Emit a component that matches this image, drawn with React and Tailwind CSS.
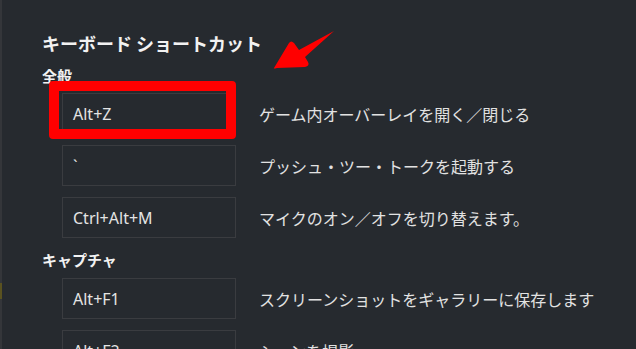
const jp = { fontFamily: '"Noto Sans CJK JP", "Noto Sans", sans-serif' };
const latin = { fontFamily: '"Noto Sans", "Noto Sans CJK JP", sans-serif' };

const sections = [
  {
    title: "全般",
    rows: [
      { keys: "Alt+Z", label: "ゲーム内オーバーレイを開く／閉じる", marked: true },
      { keys: "`", label: "プッシュ・ツー・トークを起動する" },
      { keys: "Ctrl+Alt+M", label: "マイクのオン／オフを切り替えます。" },
    ],
  },
  {
    title: "キャプチャ",
    rows: [
      { keys: "Alt+F1", label: "スクリーンショットをギャラリーに保存します" },
      { keys: "Alt+F2", label: "シーンを撮影" },
    ],
  },
];

const ShortcutRow = ({ keys, label, marked }) => (
  <div className="flex items-center mt-[11px] first:mt-0">
    <div className="relative ml-[20px] w-[174px] h-[41px] shrink-0 border border-[#3a3c40] flex items-center px-[10px]">
      <span className="text-[16px] text-[#e4e4e4]" style={latin}>
        {keys}
      </span>
      {marked && (
        <div className="absolute -left-[14px] -top-[13px] w-[187px] h-[58px] border-[10px] border-[#ff0000] rounded-[4px]"></div>
      )}
    </div>
    <span className="ml-[23px] text-[16px] text-[#e2e2e2] whitespace-nowrap" style={jp}>
      {label}
    </span>
  </div>
);

const Arrow = () => (
  <svg className="absolute left-[268px] top-[28px]" width="70" height="45" viewBox="268 28 70 45">
    <path
      d="M272 68 L287 43 Q289 40 292 43 L297 50 L332 31 L303 57 L306 62 Q308 66 303 67 L275 68 Q271 69 272 68 Z"
      fill="#ff0000"
    />
  </svg>
);

export default function App() {
  return (
    <div className="flex w-[636px] h-[349px] overflow-hidden bg-[#262a2f]">
      <div className="w-[2px] shrink-0 bg-[#34363a] flex flex-col">
        <div className="h-[283px]"></div>
        <div className="h-[16px] bg-[#5a5220]"></div>
      </div>
      <div className="relative flex-1 pl-[40px] pt-[30px]">
        <h1 className="text-[18px] leading-[26px] font-bold text-[#f2f2f2]" style={jp}>
          キーボード ショートカット
        </h1>
        {sections.map((section, i) => (
          <div key={section.title} className={i === 0 ? "mt-[9px]" : "mt-[11px]"}>
            <h2 className="text-[15px] leading-[22px] font-bold text-[#f2f2f2]" style={jp}>
              {section.title}
            </h2>
            <div className={i === 0 ? "mt-[6px]" : "mt-[7px]"}>
              {section.rows.map((row) => (
                <ShortcutRow key={row.keys} {...row} />
              ))}
            </div>
          </div>
        ))}
        <Arrow />
      </div>
    </div>
  );
}
